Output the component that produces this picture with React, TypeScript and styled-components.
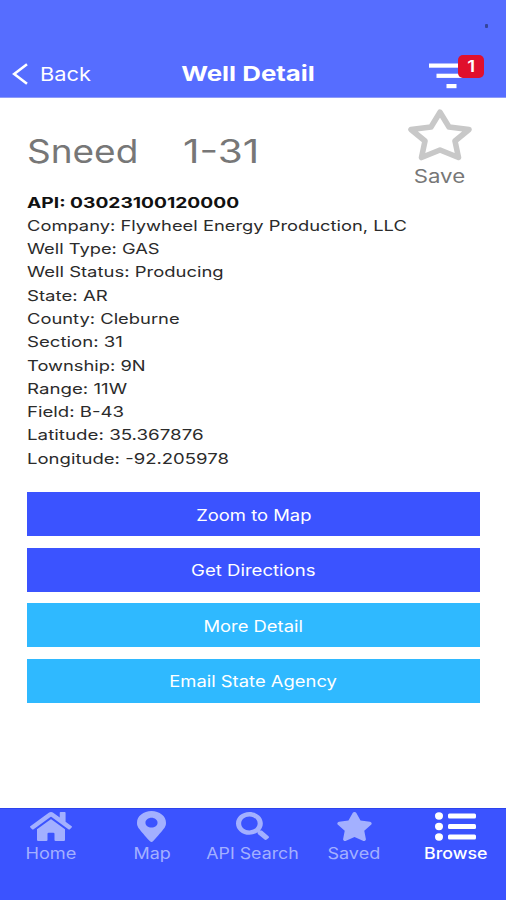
import React from "react";
import styled, { createGlobalStyle } from "styled-components";
import { FaHome, FaMapMarkerAlt, FaSearch, FaStar } from "react-icons/fa";

const GlobalStyle = createGlobalStyle`
  * { box-sizing: border-box; }
  body { margin: 0; background: #fff; font-family: Inter, "Liberation Sans", sans-serif; }
`;

const Screen = styled.div`
  width: 506px;
  height: 900px;
  display: flex;
  flex-direction: column;
  overflow: hidden;
  background: #fff;
`;

const Wide = styled.span<{ $x?: number; $origin?: string }>`
  display: inline-block;
  white-space: pre;
  transform: scaleX(${(p) => p.$x ?? 1.2});
  transform-origin: ${(p) => p.$origin ?? "left"} center;
`;

const Header = styled.header`
  position: relative;
  flex: none;
  height: 98px;
  padding: 50px 22px 0 12px;
  display: grid;
  grid-template-columns: 1fr auto 1fr;
  background: #566dff;
  color: #fff;
  border-bottom: 1px solid #8d9bf8;
  line-height: 48px;
`;

const CameraDot = styled.i`
  position: absolute;
  left: 485px;
  top: 24px;
  width: 3px;
  height: 4px;
  border-radius: 1px;
  background: #35459c;
`;

const BackButton = styled.button`
  display: flex;
  align-items: center;
  gap: 12px;
  padding: 0;
  border: 0;
  background: none;
  color: inherit;
  font: 400 18.5px/48px Inter, sans-serif;
`;

const Title = styled.h1`
  margin: 0;
  font-size: 20.5px;
  font-weight: 700;
  line-height: 48px;
`;

const FilterButton = styled.div`
  position: relative;
  justify-self: end;
  width: 55px;
  height: 47px;
`;

const FilterIcon = styled.svg`
  display: block;
  margin-top: 13px;
`;

const Badge = styled.span`
  position: absolute;
  right: 0;
  top: 5px;
  width: 26px;
  height: 23px;
  border-radius: 5px;
  background: #e00f2c;
  font-size: 15.5px;
  font-weight: 600;
  line-height: 23px;
  text-align: center;
`;

const Main = styled.main`
  flex: 1;
  padding: 11px 26px 0 27px;
`;

const Heading = styled.div`
  height: 82.5px;
  display: flex;
  justify-content: space-between;
`;

const WellName = styled.h2`
  margin: 21px 0 0;
  display: flex;
  font-size: 32px;
  font-weight: 400;
  line-height: 44px;
  color: #777;
`;

const NamePart = styled.span`
  width: 156px;
`;

const SaveButton = styled.div`
  width: 81px;
  display: flex;
  flex-direction: column;
  align-items: center;
  font-size: 18.5px;
  line-height: 24px;
  color: #777;
`;

const StarOutline = styled.svg`
  display: block;
  margin-bottom: 2px;
`;

const Details = styled.ul`
  margin: 0;
  padding: 0 0 0 0.4px;
  list-style: none;
  font-size: 14.6px;
  line-height: 23.3px;
  color: #2b2b2b;
`;

const Detail = styled.li<{ $strong?: boolean }>`
  height: 23.3px;
  font-weight: ${(p) => (p.$strong ? 700 : 400)};
  color: ${(p) => (p.$strong ? "#111" : "inherit")};
`;

const Actions = styled.div`
  display: grid;
  grid-auto-rows: 44px;
  gap: 11.4px;
  margin-top: 21.4px;
`;

const Action = styled.button<{ $light?: boolean }>`
  padding: 2.5px 0 0;
  border: 0;
  color: #fff;
  background: ${(p) => (p.$light ? "#2fb9ff" : "#3b53ff")};
  font: 400 15.6px/41.5px Inter, sans-serif;
`;

const TabBar = styled.nav`
  flex: none;
  height: 92px;
  display: grid;
  grid-template-columns: repeat(5, 1fr);
  background: #3b53ff;
  border-top: 1px solid #2c43ee;
`;

const Tab = styled.div<{ $active?: boolean }>`
  display: flex;
  flex-direction: column;
  align-items: center;
  color: ${(p) => (p.$active ? "#fff" : "#a3b0ff")};
  font-size: 15.6px;
  font-weight: ${(p) => (p.$active ? 500 : 400)};
  line-height: 20px;
`;

const TabIcon = styled.div`
  height: 35px;
  padding-bottom: 1px;
  display: flex;
  align-items: center;
`;

const details: [string, string, number][] = [
  ["API", "03023100120000", 1.315],
  ["Company", "Flywheel Energy Production, LLC", 1.256],
  ["Well Type", "GAS", 1.253],
  ["Well Status", "Producing", 1.265],
  ["State", "AR", 1.275],
  ["County", "Cleburne", 1.258],
  ["Section", "31", 1.275],
  ["Township", "9N", 1.255],
  ["Range", "11W", 1.28],
  ["Field", "B-43", 1.275],
  ["Latitude", "35.367876", 1.285],
  ["Longitude", "-92.205978", 1.27],
];

const actions = [
  { label: "Zoom to Map", x: 1.18 },
  { label: "Get Directions", x: 1.19 },
  { label: "More Detail", light: true, x: 1.18 },
  { label: "Email State Agency", light: true, x: 1.18 },
];

const ListIcon = () => (
  <svg width="42" height="29" viewBox="0 0 42 29" fill="currentColor">
    {[4, 14.5, 25].map((y) => (
      <React.Fragment key={y}>
        <ellipse cx="5" cy={y} rx="4" ry="3.7" />
        <rect x="14" y={y - 2.5} width="28" height="5" rx="1.5" />
      </React.Fragment>
    ))}
  </svg>
);

const HomeIcon = styled(FaHome)`
  width: 42px;
  height: 33px;
`;
const PinIcon = styled(FaMapMarkerAlt)`
  width: 29px;
  height: 31px;
`;
const SearchIcon = styled(FaSearch)`
  width: 33px;
  height: 28px;
`;
const SavedIcon = styled(FaStar)`
  width: 37px;
  height: 29px;
`;

const tabs = [
  { label: "Home", x: 1.165, icon: <HomeIcon preserveAspectRatio="none" /> },
  { label: "Map", x: 1.15, icon: <PinIcon preserveAspectRatio="none" /> },
  { label: "API Search", x: 1.14, icon: <SearchIcon preserveAspectRatio="none" /> },
  { label: "Saved", x: 1.155, icon: <SavedIcon preserveAspectRatio="none" /> },
  { label: "Browse", x: 1.14, active: true, icon: <ListIcon /> },
];

export default function App() {
  return (
    <Screen>
      <GlobalStyle />
      <Header>
        <CameraDot />
        <BackButton>
          <svg width="16" height="22" viewBox="0 0 16 22" fill="none" stroke="#fff" strokeWidth="2.6">
            <path d="M15 1.200 2.200 11l12.800 9.800" />
          </svg>
          <Wide $x={1.18}>Back</Wide>
        </BackButton>
        <Title>
          <Wide $x={1.26} $origin="center">Well Detail</Wide>
        </Title>
        <FilterButton>
          <FilterIcon width="38" height="27" viewBox="0 0 38 27" fill="#fff">
            <rect x="0" y="0.500" width="36" height="4.200" />
            <rect x="7.500" y="10.700" width="26" height="4.200" />
            <rect x="17.500" y="21" width="10" height="4.200" />
          </FilterIcon>
          <Badge>
            <Wide $origin="center">1</Wide>
          </Badge>
        </FilterButton>
      </Header>
      <Main>
        <Heading>
          <WellName>
            <NamePart>
              <Wide $x={1.155}>Sneed</Wide>
            </NamePart>
            <Wide $x={1.265}>1-31</Wide>
          </WellName>
          <SaveButton>
            <StarOutline width="66" height="53" viewBox="0 0 66 53" fill="none" stroke="#c8c8c8" strokeWidth="5.600" strokeLinejoin="round">
              <path d="M33 3.200 42 18 62 20.500 48 32 51.500 48.500 33 41 14.500 48.500 18 32 4 20.500 24 18Z" />
            </StarOutline>
            <Wide $origin="center">Save</Wide>
          </SaveButton>
        </Heading>
        <Details>
          {details.map(([name, value, x], i) => (
            <Detail key={name} $strong={i === 0}>
              <Wide $x={x}>{`${name}: ${value}`}</Wide>
            </Detail>
          ))}
        </Details>
        <Actions>
          {actions.map((a) => (
            <Action key={a.label} $light={a.light}>
              <Wide $x={a.x} $origin="center">{a.label}</Wide>
            </Action>
          ))}
        </Actions>
      </Main>
      <TabBar>
        {tabs.map((t) => (
          <Tab key={t.label} $active={t.active}>
            <TabIcon>{t.icon}</TabIcon>
            <Wide $x={t.x} $origin="center">{t.label}</Wide>
          </Tab>
        ))}
      </TabBar>
    </Screen>
  );
}
